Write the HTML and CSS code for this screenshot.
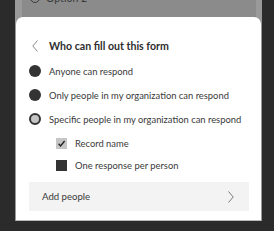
FILE: index.html
```html
<!DOCTYPE html>
<html>
<head>
<meta charset="utf-8">
<link rel="stylesheet" href="styles.css">
</head>
<body>
<div class="frame">
  <div class="panel">
    <div class="option">
      <span class="option-radio"></span>
      <span class="option-text">Option 2</span>
    </div>
  </div>
  <div class="sheet">
    <div class="header">
      <svg class="back" width="6" height="12" viewBox="0 0 6 12"><path d="M5.5 0.5 L0.8 6 L5.5 11.5" fill="none" stroke="#8a8a8a" stroke-width="1"/></svg>
      <span class="title">Who can fill out this form</span>
    </div>
    <div class="radios">
      <div class="radio-row"><span class="radio"></span><span class="label">Anyone can respond</span></div>
      <div class="radio-row"><span class="radio"></span><span class="label">Only people in my organization can respond</span></div>
      <div class="radio-row"><span class="radio radio-selected"></span><span class="label">Specific people in my organization can respond</span></div>
    </div>
    <div class="checks">
      <div class="check-row"><span class="check check-on"><svg width="11" height="11" viewBox="0 0 11 11"><path d="M2.6 5.8 L4.6 7.9 L8.6 3" fill="none" stroke="#222" stroke-width="1.4"/></svg></span><span class="label">Record name</span></div>
      <div class="check-row"><span class="check check-dark"></span><span class="label">One response per person</span></div>
    </div>
    <div class="add">
      <span class="add-label">Add people</span>
      <svg class="fwd" width="6" height="12" viewBox="0 0 6 12"><path d="M0.5 0.5 L5.2 6 L0.5 11.5" fill="none" stroke="#7a7a7a" stroke-width="1"/></svg>
    </div>
  </div>
</div>
</body>
</html>
```
FILE: styles.css
```css
html, body {
  margin: 0;
  padding: 0;
}
body {
  width: 274px;
  height: 231px;
  overflow: hidden;
  background: #2b2b2b;
  font-family: "Lato", "Open Sans", sans-serif;
}
.frame {
  margin-left: 15px;
  width: 247px;
  background: #9a9a9a;
}
.panel {
  margin: 0 6px 0 7px;
  height: 17px;
  background: #8b8b8b;
  overflow: hidden;
}
.option {
  display: flex;
  align-items: center;
  gap: 6px;
  margin-top: -8px;
  padding-left: 8px;
  height: 12px;
}
.option-radio {
  width: 8px;
  height: 8px;
  border: 1.5px solid #3c3c3c;
  border-radius: 50%;
}
.option-text {
  font-size: 10.5px;
  color: #3a3a3a;
}
.sheet {
  margin-left: 1px;
  width: 245px;
  height: 204px;
  background: #fff;
  border-radius: 7px 7px 0 0;
  border-bottom: 1px solid #b9b9b9;
  box-sizing: border-box;
  padding: 19px 10px 0 13px;
  display: flex;
  flex-direction: column;
}
.header {
  display: flex;
  align-items: center;
  height: 20px;
  padding-left: 3px;
  margin-bottom: 3px;
}
.back {
  margin-right: 11px;
}
.title {
  font-size: 10.6px;
  font-weight: 700;
  color: #2e2e2e;
  white-space: nowrap;
}
.radios {
  display: flex;
  flex-direction: column;
}
.radio-row {
  display: flex;
  align-items: center;
  height: 24px;
}
.radio {
  flex: none;
  width: 12px;
  height: 12px;
  border-radius: 50%;
  background: #333;
  box-sizing: border-box;
  margin-left: 0;
  margin-right: 8px;
}
.radio-selected {
  background: #c4c4c4;
  border: 2px solid #333;
}
.label {
  font-size: 9.4px;
  color: #3a3a3a;
  white-space: nowrap;
}
.checks {
  margin-top: 2px;
  display: flex;
  flex-direction: column;
}
.check-row {
  display: flex;
  align-items: center;
  height: 21.5px;
  padding-left: 27px;
}
.check {
  flex: none;
  width: 11px;
  height: 11px;
  margin-right: 8px;
  display: flex;
}
.check-on {
  background: #c6c6c6;
}
.check-dark {
  background: #333;
}
.add {
  margin-top: 6px;
  margin-right: 2px;
  height: 29px;
  background: #f3f3f3;
  display: flex;
  align-items: center;
  justify-content: space-between;
  padding: 0 15px 0 13px;
}
.add-label {
  font-size: 9.6px;
  color: #3a3a3a;
}
```
